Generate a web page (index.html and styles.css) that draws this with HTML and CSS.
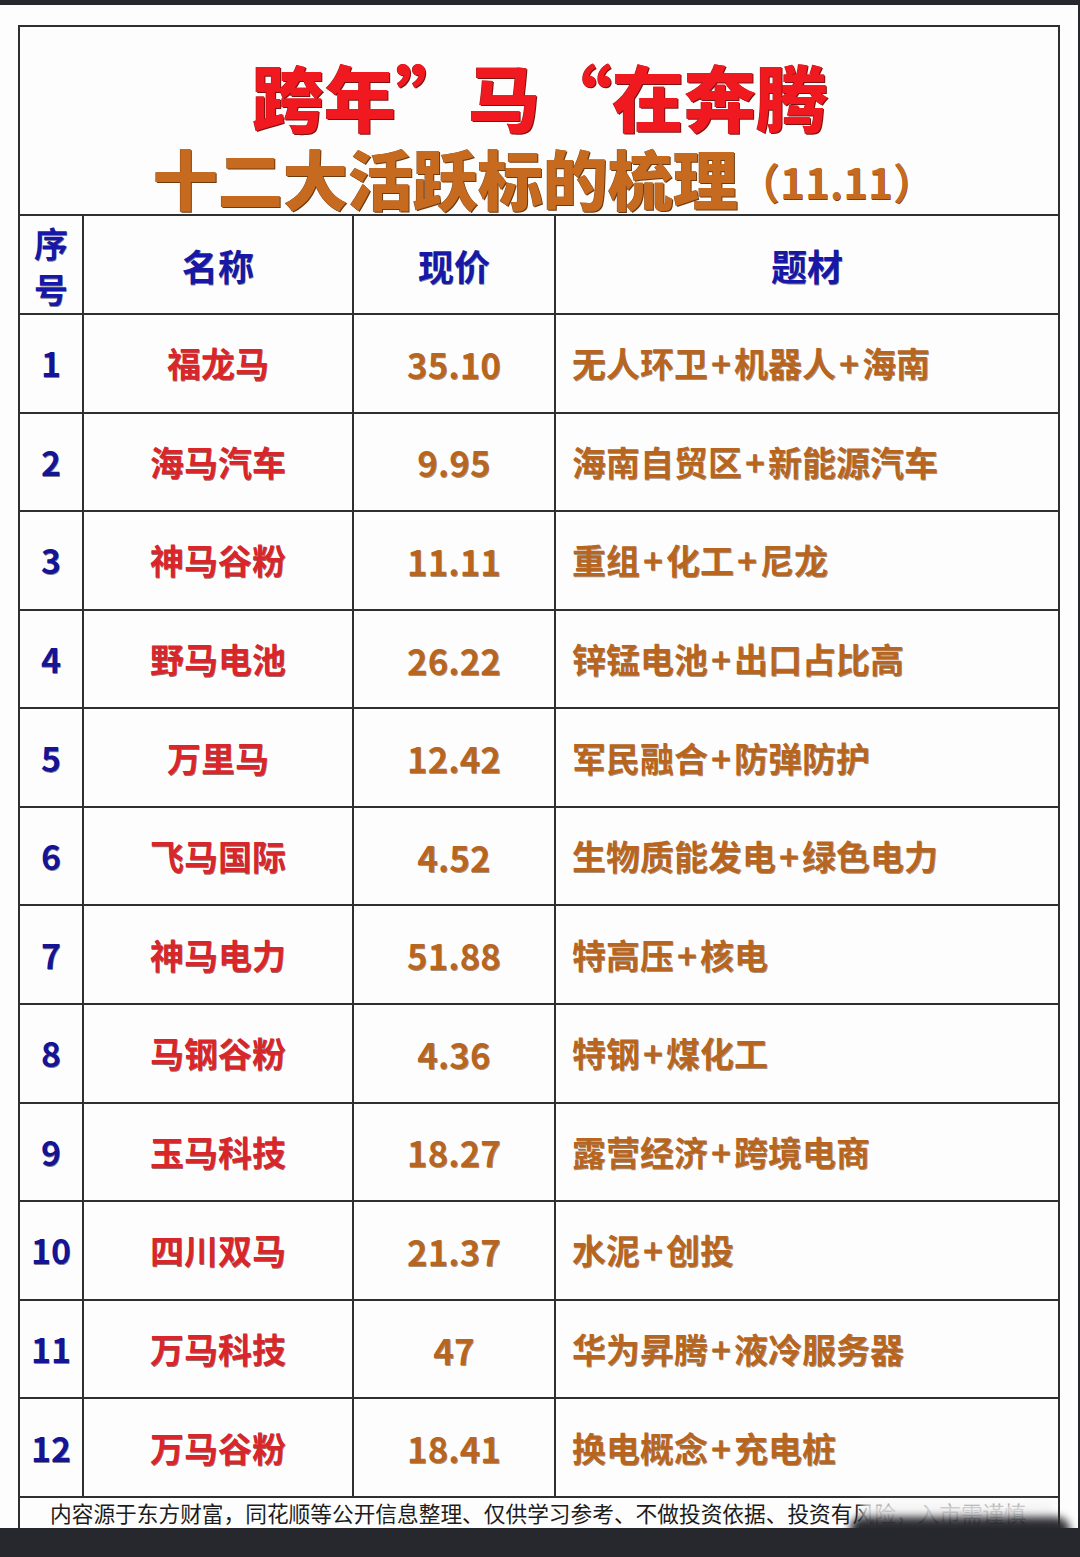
FILE: index.html
```html
<!DOCTYPE html>
<html lang="zh-CN">
<head>
<meta charset="utf-8">
<title>跨年马在奔腾</title>
<link rel="stylesheet" href="styles.css">
</head>
<body>
<div class="sheet">
  <div class="board">
    <div class="title-box">
      <div class="title-main">跨年”马“在奔腾</div>
      <div class="title-sub">十二大活跃标的梳理<span class="title-date">（11.11）</span></div>
    </div>
    <div class="grid">
      <div class="cell head col-no"><span class="vert">序<br>号</span></div>
      <div class="cell head">名称</div>
      <div class="cell head">现价</div>
      <div class="cell head last">题材</div>

      <div class="cell no">1</div><div class="cell name">福龙马</div><div class="cell price">35.10</div><div class="cell topic last">无人环卫<span class="plus">+</span>机器人<span class="plus">+</span>海南</div>
      <div class="cell no">2</div><div class="cell name">海马汽车</div><div class="cell price">9.95</div><div class="cell topic last">海南自贸区<span class="plus">+</span>新能源汽车</div>
      <div class="cell no">3</div><div class="cell name">神马谷粉</div><div class="cell price">11.11</div><div class="cell topic last">重组<span class="plus">+</span>化工<span class="plus">+</span>尼龙</div>
      <div class="cell no">4</div><div class="cell name">野马电池</div><div class="cell price">26.22</div><div class="cell topic last">锌锰电池<span class="plus">+</span>出口占比高</div>
      <div class="cell no">5</div><div class="cell name">万里马</div><div class="cell price">12.42</div><div class="cell topic last">军民融合<span class="plus">+</span>防弹防护</div>
      <div class="cell no">6</div><div class="cell name">飞马国际</div><div class="cell price">4.52</div><div class="cell topic last">生物质能发电<span class="plus">+</span>绿色电力</div>
      <div class="cell no">7</div><div class="cell name">神马电力</div><div class="cell price">51.88</div><div class="cell topic last">特高压<span class="plus">+</span>核电</div>
      <div class="cell no">8</div><div class="cell name">马钢谷粉</div><div class="cell price">4.36</div><div class="cell topic last">特钢<span class="plus">+</span>煤化工</div>
      <div class="cell no">9</div><div class="cell name">玉马科技</div><div class="cell price">18.27</div><div class="cell topic last">露营经济<span class="plus">+</span>跨境电商</div>
      <div class="cell no">10</div><div class="cell name">四川双马</div><div class="cell price">21.37</div><div class="cell topic last">水泥<span class="plus">+</span>创投</div>
      <div class="cell no">11</div><div class="cell name">万马科技</div><div class="cell price">47</div><div class="cell topic last">华为昇腾<span class="plus">+</span>液冷服务器</div>
      <div class="cell no">12</div><div class="cell name">万马谷粉</div><div class="cell price">18.41</div><div class="cell topic last">换电概念<span class="plus">+</span>充电桩</div>

      <div class="cell foot">内容源于东方财富，同花顺等公开信息整理、仅供学习参考、不做投资依据、投资有风险，入市需谨慎</div>
    </div>
  </div>
  <div class="wm-light"></div>
  <div class="wm-dark"></div>
</div>
</body>
</html>
```

FILE: styles.css
```css
html, body {
  margin: 0;
  padding: 0;
}
body {
  background: #27272e;
  width: 1080px;
  height: 1557px;
  overflow: hidden;
  font-family: "Noto Sans CJK SC", "Noto Sans", sans-serif;
}
.sheet {
  position: relative;
  margin-top: 5px;
  width: 1078px;
  height: 1523px;
  background: #fdfdfd;
  overflow: hidden;
  box-sizing: border-box;
  padding: 20px 0 0 18px;
}
.board {
  width: 1042px;
  border: 2px solid #2f2f2f;
  border-bottom: none;
  box-sizing: border-box;
}
.title-box {
  height: 189px;
  border-bottom: 2px solid #2f2f2f;
  box-sizing: border-box;
  padding-top: 32px;
  text-align: center;
  text-spacing-trim: space-all;
}
.title-main {
  font-size: 72px;
  line-height: 72px;
  height: 72px;
  font-weight: 900;
  color: #f0191f;
  font-feature-settings: "fwid" 1;
  text-shadow: 1px 1px 0 #7c1212, -0.5px -0.5px 0 #a51818;
  padding-left: 2px;
}
.title-sub {
  margin-top: 14px;
  font-size: 65px;
  line-height: 64px;
  height: 64px;
  font-weight: 900;
  color: #c66a1f;
  text-shadow: 1px 1px 0 #6e3a10, -0.5px -0.5px 0 #8a4a15;
  padding-left: 10px;
}
.title-date {
  font-size: 42px;
  font-weight: 700;
  vertical-align: 6px;
  text-shadow: 0.5px 0.5px 0 #7a4212;
}
.grid {
  display: grid;
  grid-template-columns: 64px 270px 202px 502px;
  grid-template-rows: 99px repeat(12, 98.58px) 40px;
}
.cell {
  display: flex;
  align-items: center;
  justify-content: center;
  border-right: 2px solid #2f2f2f;
  border-bottom: 2px solid #2f2f2f;
  box-sizing: border-box;
  font-weight: 700;
  font-size: 34px;
  line-height: 1;
}
.cell.last {
  border-right: none;
}
.head {
  color: #1818a6;
  font-size: 36px;
  text-shadow: 0.5px 0.5px 0 rgba(0, 0, 40, 0.5);
}
.vert {
  font-size: 34px;
  line-height: 46px;
  text-align: center;
  padding-top: 2px;
}
.no {
  color: #141494;
  font-size: 34px;
  text-shadow: 0.5px 0.5px 0 rgba(0, 0, 40, 0.5);
}
.name {
  color: #d8262a;
  text-shadow: 0.6px 0.6px 0 rgba(90, 10, 10, 0.6);
}
.price {
  color: #b8661f;
  font-size: 35px;
  text-shadow: 0.6px 0.6px 0 rgba(80, 40, 5, 0.5);
}
.topic {
  justify-content: flex-start;
  padding-left: 16px;
  color: #b8661f;
  text-shadow: 0.6px 0.6px 0 rgba(80, 40, 5, 0.5);
}
.plus {
  margin: 0 3px;
}
.foot {
  grid-column: 1 / -1;
  border-right: none;
  border-bottom: none;
  justify-content: flex-start;
  align-items: flex-start;
  padding-left: 30px;
  font-size: 21.7px;
  line-height: 30px;
  font-weight: 400;
  color: #1c1c1c;
  white-space: nowrap;
}
.wm-light {
  position: absolute;
  left: 862px;
  top: 1497px;
  width: 190px;
  height: 20px;
  background: rgba(245, 245, 245, 0.85);
  filter: blur(3px);
}
.wm-dark {
  position: absolute;
  left: 850px;
  top: 1512px;
  width: 220px;
  height: 30px;
  background: #2a2a31;
  border-radius: 12px 14px 0 0;
  filter: blur(4px);
}
```
